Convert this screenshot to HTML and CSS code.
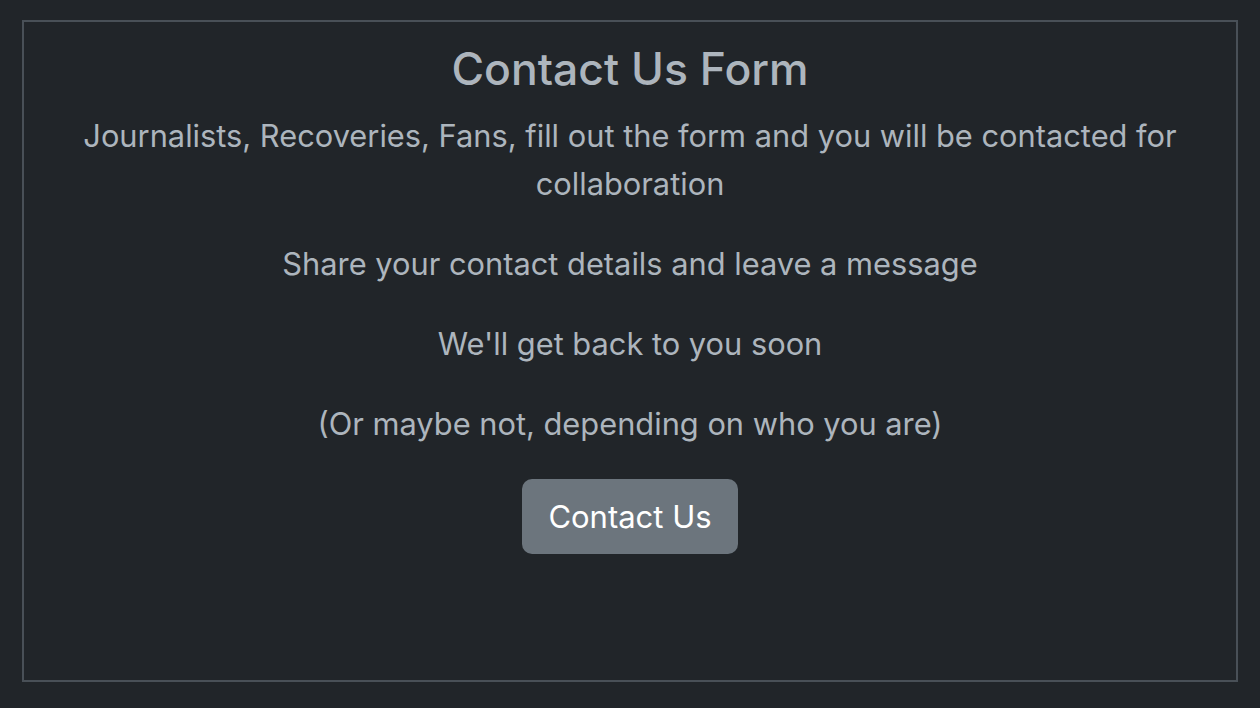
FILE: index.html
```html
<!DOCTYPE html>
<html lang="en">
<head>
<meta charset="utf-8">
<title>Contact Us Form</title>
<link rel="stylesheet" href="styles.css">
</head>
<body>
<main class="frame">
  <h1 class="title">Contact Us Form</h1>
  <p class="lead">Journalists, Recoveries, Fans, fill out the form and you will be contacted for collaboration</p>
  <p class="lead">Share your contact details and leave a message</p>
  <p class="lead">We'll get back to you soon</p>
  <p class="lead">(Or maybe not, depending on who you are)</p>
  <button class="btn" type="button">Contact Us</button>
</main>
</body>
</html>
```
FILE: styles.css
```css
html, body {
  margin: 0;
  padding: 0;
  background: #212529;
}
body {
  padding: 20px 22px 26px 22px;
  font-family: Inter, "Noto Sans", "Liberation Sans", sans-serif;
  color: #adb5bd;
}
.frame {
  box-sizing: border-box;
  height: 662px;
  border: 2px solid #495057;
  display: flex;
  flex-direction: column;
  align-items: center;
  text-align: center;
  padding: 18px 30px 0 30px;
}
.title {
  margin: 0 0 14px 0;
  font-size: 44.5px;
  font-weight: 500;
  line-height: 58px;
  color: #adb5bd;
}
.lead {
  margin: 0 0 32px 0;
  font-size: 30.8px;
  line-height: 48px;
  font-weight: 400;
}
.btn {
  margin-top: -1px;
  width: 216px;
  height: 75px;
  border: none;
  border-radius: 10px;
  background: #6c757d;
  color: #ffffff;
  font-family: Inter, "Noto Sans", "Liberation Sans", sans-serif;
  font-size: 31px;
  font-weight: 400;
}
```
